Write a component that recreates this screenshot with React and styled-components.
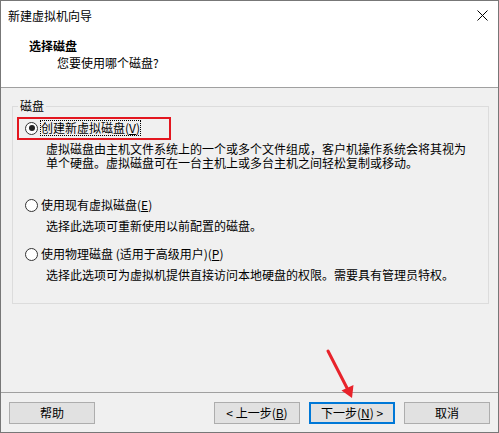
import React from "react";
import styled, { createGlobalStyle } from "styled-components";

const GlobalStyle = createGlobalStyle`
  html, body {
    margin: 0;
    padding: 0;
    background: #ffffff;
  }
  * {
    box-sizing: border-box;
  }
`;

const font = `"Noto Sans CJK SC", "Noto Sans", "Liberation Sans", sans-serif`;

const Window = styled.div`
  position: relative;
  width: 499px;
  height: 433px;
  border: 1px solid #777777;
  display: flex;
  flex-direction: column;
  font-family: ${font};
  font-size: 12px;
  color: #000;
  background: #ffffff;
  overflow: hidden;
`;

const TitleBar = styled.div`
  height: 29px;
  display: flex;
  align-items: center;
  justify-content: space-between;
  padding: 0 10px 0 7px;
  line-height: 16px;
`;

const CloseButton = styled.span`
  display: flex;
  width: 11px;
  height: 11px;
`;

const Header = styled.div`
  padding: 8px 0 16px 28px;
  border-bottom: 1px solid #a0a0a0;
`;

const HeaderTitle = styled.div`
  font-weight: 700;
  line-height: 16px;
`;

const HeaderSub = styled.div`
  margin-top: 1px;
  padding-left: 28px;
  line-height: 16px;
`;

const Body = styled.div`
  flex: 1;
  background: #f0f0f0;
  padding: 10px 9px 0 11px;
`;

const GroupBox = styled.fieldset`
  margin: 0;
  padding: 0;
  border: 1px solid #dcdcdc;
  min-width: 0;
`;

const Legend = styled.legend`
  margin-left: 5px;
  padding: 0 2px;
  line-height: 16px;
`;

const Options = styled.div`
  display: flex;
  flex-direction: column;
  gap: 13px;
  padding: 6px 12px 21px 12px;
`;

const Option = styled.div`
  position: relative;
`;

const RadioRow = styled.div`
  display: flex;
  align-items: center;
  gap: 2px;
  height: 16px;
  line-height: 16px;
`;

const Radio = styled.span`
  position: relative;
  width: 13px;
  height: 13px;
  border-radius: 50%;
  border: 1px solid #333333;
  background: #ffffff;
  flex-shrink: 0;

  &::after {
    content: "";
    display: ${(p) => (p.$checked ? "block" : "none")};
    position: absolute;
    left: 2.5px;
    top: 2.5px;
    width: 6px;
    height: 6px;
    border-radius: 50%;
    background: #222222;
  }
`;

const Label = styled.span`
  padding: 0 1px;
  outline: ${(p) => (p.$focused ? "1px dotted #000" : "none")};
  outline-offset: -1px;
`;

const Callout = styled.span`
  position: absolute;
  left: -8px;
  top: -3px;
  width: 154px;
  height: 23px;
  border: 2px solid #e3161f;
  pointer-events: none;
`;

const Desc = styled.div`
  margin-top: 6px;
  padding-left: 21px;
  line-height: 14px;
  min-height: ${(p) => p.$lines * 14}px;
`;

const Footer = styled.div`
  display: flex;
  justify-content: space-between;
  align-items: center;
  padding: 9px 8px 8px 8px;
  border-top: 1px solid #a0a0a0;
  background: #f0f0f0;
`;

const ButtonGroup = styled.div`
  display: flex;
  gap: 9px;
`;

const Button = styled.button`
  width: 86px;
  height: 22px;
  padding: 0;
  font-family: ${font};
  font-size: 12px;
  line-height: 16px;
  color: #000;
  background: #e1e1e1;
  border: ${(p) => (p.$default ? "2px solid #0078d7" : "1px solid #adadad")};
  border-radius: 0;
`;

const Arrow = styled.svg`
  position: absolute;
  left: 319px;
  top: 344px;
  pointer-events: none;
`;

const Key = ({ children }) => <u>{children}</u>;

const options = [
  {
    label: <>创建新虚拟磁盘(<Key>V</Key>)</>,
    desc: (
      <>
        虚拟磁盘由主机文件系统上的一个或多个文件组成，客户机操作系统会将其视为
        <br />
        单个硬盘。虚拟磁盘可在一台主机上或多台主机之间轻松复制或移动。
      </>
    ),
    lines: 3,
    checked: true,
  },
  {
    label: <>使用现有虚拟磁盘(<Key>E</Key>)</>,
    desc: "选择此选项可重新使用以前配置的磁盘。",
    lines: 1,
  },
  {
    label: <>使用物理磁盘 (适用于高级用户)(<Key>P</Key>)</>,
    desc: "选择此选项可为虚拟机提供直接访问本地硬盘的权限。需要具有管理员特权。",
    lines: 1,
  },
];

export default function App() {
  return (
    <>
      <GlobalStyle />
      <Window>
        <TitleBar>
          <span>新建虚拟机向导</span>
          <CloseButton>
            <svg width="11" height="11" viewBox="0 0 11 11">
              <path d="M0.5 0.5 L10.5 10.5 M10.5 0.5 L0.5 10.5" stroke="#000" strokeWidth="1" />
            </svg>
          </CloseButton>
        </TitleBar>
        <Header>
          <HeaderTitle>选择磁盘</HeaderTitle>
          <HeaderSub>您要使用哪个磁盘?</HeaderSub>
        </Header>
        <Body>
          <GroupBox>
            <Legend>磁盘</Legend>
            <Options>
              {options.map((o, i) => (
                <Option key={i}>
                  <RadioRow>
                    <Radio $checked={o.checked} />
                    <Label $focused={o.checked}>{o.label}</Label>
                  </RadioRow>
                  <Desc $lines={o.lines}>{o.desc}</Desc>
                  {o.checked && <Callout />}
                </Option>
              ))}
            </Options>
          </GroupBox>
        </Body>
        <Footer>
          <Button>帮助</Button>
          <ButtonGroup>
            <Button>&lt; 上一步(<Key>B</Key>)</Button>
            <Button $default>下一步(<Key>N</Key>) &gt;</Button>
            <Button>取消</Button>
          </ButtonGroup>
        </Footer>
        <Arrow width="40" height="60" viewBox="0 0 40 60">
          <line x1="8" y1="6" x2="27" y2="43" stroke="#e8232b" strokeWidth="3" strokeLinecap="round" />
          <polygon points="32,53 21.5,45.5 33.5,40" fill="#e8232b" />
        </Arrow>
      </Window>
    </>
  );
}
